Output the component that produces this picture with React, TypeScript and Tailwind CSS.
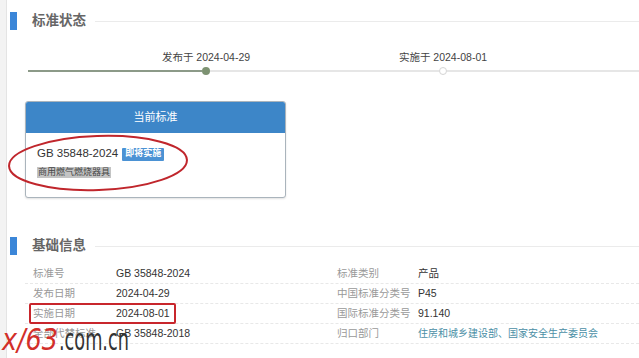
import React from "react";

const rows = [
  { l1: "标准号", v1: "GB 35848-2024", l2: "标准类别", v2: "产品", link: false },
  { l1: "发布日期", v1: "2024-04-29", l2: "中国标准分类号", v2: "P45", link: false },
  { l1: "实施日期", v1: "2024-08-01", l2: "国际标准分类号", v2: "91.140", link: false, mark: true },
  { l1: "全部代替标准", v1: "GB 35848-2018", l2: "归口部门", v2: "住房和城乡建设部、国家安全生产委员会", link: true },
];

function SectionHeader({ title }: { title: string }) {
  return (
    <div className="flex items-center h-[18px]">
      <div className="w-[7px] h-[18px] bg-[#3b86d8]" />
      <div className="ml-[15px] text-[13.5px] leading-[18px] font-bold text-[#666]">{title}</div>
      <div className="flex-1 h-px bg-[#ebebeb] ml-[9px]" />
    </div>
  );
}

export default function App() {
  return (
    <div className="relative w-[639px] h-[358px] bg-white flex overflow-hidden font-['Liberation_Sans','Noto_Sans_CJK_SC',sans-serif]">
      <div className="w-[7px] h-full bg-[#f3f3f3] border-r border-[#e4e4e4]" />
      <div className="flex-1 flex flex-col pl-[3px]">
        <div className="mt-[12px]">
          <SectionHeader title="标准状态" />
        </div>

        {/* timeline */}
        <div className="mt-[35px] ml-[18px] h-[12px] flex items-center">
          <div className="w-[174px] h-[2px] bg-[#8c9a88]" />
          <div className="relative w-[8px] h-[8px]">
            <div className="w-[8px] h-[8px] rounded-full bg-[#7d9272]" />
            <div className="absolute bottom-[11px] left-1/2 -translate-x-1/2 whitespace-nowrap text-[10.5px] leading-[14px] text-[#444]">
              发布于 2024-04-29
            </div>
          </div>
          <div className="w-[229px] h-[2px] bg-[#e6e6e6]" />
          <div className="relative w-[8px] h-[8px]">
            <div className="w-[8px] h-[8px] rounded-full bg-white border border-[#d4d4d4]" />
            <div className="absolute bottom-[11px] left-1/2 -translate-x-1/2 whitespace-nowrap text-[10.5px] leading-[14px] text-[#444] bg-white px-[3px]">
              实施于 2024-08-01
            </div>
          </div>
          <div className="flex-1 h-[2px] bg-[#e6e6e6]" />
        </div>

        {/* card */}
        <div className="relative mt-[24px] ml-[15px] w-[261px] h-[97px]">
          <div className="w-full h-full rounded-[3px] border border-[#aab4bc] shadow-[0_1px_2px_rgba(0,0,0,0.12)] overflow-hidden flex flex-col bg-white">
            <div className="h-[31px] bg-[#3d86c8] flex items-center justify-center text-white text-[11px]">
              当前标准
            </div>
            <div className="pl-[11px] flex flex-col">
              <div className="mt-[14px] h-[14px] flex items-center">
                <span className="text-[11.5px] text-[#333]">GB 35848-2024</span>
                <span className="ml-[4px] h-[13px] w-[42px] bg-[#4b92d4] text-white text-[9px] font-bold flex items-center justify-center rounded-[1px]">
                  即将实施
                </span>
              </div>
              <div className="mt-[5px] h-[12px] flex items-center">
                <span className="bg-[#c4c4c4] text-[#444] text-[9px] leading-[11px] px-[1px]">商用燃气燃烧器具</span>
              </div>
            </div>
          </div>
          <svg className="absolute left-[-18px] top-[33px]" width="184" height="60" viewBox="0 0 184 60">
            <ellipse cx="91" cy="29" rx="89" ry="27" fill="none" stroke="#c0262c" strokeWidth="2" transform="rotate(-2 91 29)" />
          </svg>
        </div>

        <div className="mt-[39px]">
          <SectionHeader title="基础信息" />
        </div>

        {/* table */}
        <div className="mt-[9px] ml-[15px] flex flex-col text-[10.5px]">
          {rows.map((r, i) => (
            <div key={i} className="relative h-[20px] flex items-center border-b border-dashed border-[#e8e8e8]">
              <div className="w-[304px] pl-[8px] flex items-center">
                <span className="w-[83px] text-[#999]">{r.l1}</span>
                <span className="text-[#333]">{r.v1}</span>
              </div>
              <div className="flex-1 pl-[8px] flex items-center">
                <span className="w-[81px] text-[#999]">{r.l2}</span>
                <span className={r.link ? "text-[#4b8fa6] text-[10px]" : "text-[#333]"}>{r.v2}</span>
              </div>
              {r.mark && (
                <div className="absolute left-[4px] top-[-1px] w-[147px] h-[21px] border-2 border-[#c8262c] rounded-[2px]" />
              )}
            </div>
          ))}
        </div>
      </div>

      {/* watermark */}
      <div className="absolute left-[2px] top-[324px] flex items-baseline whitespace-nowrap font-['DejaVu_Sans',sans-serif] leading-none">
        <span className="text-[31px] italic text-[#d22f2a] origin-left scale-x-[0.82] inline-block w-[57px]">x/63</span>
        <span className="text-[31px] text-[#333] origin-left scale-x-[0.57] inline-block">.com.cn</span>
      </div>
    </div>
  );
}
